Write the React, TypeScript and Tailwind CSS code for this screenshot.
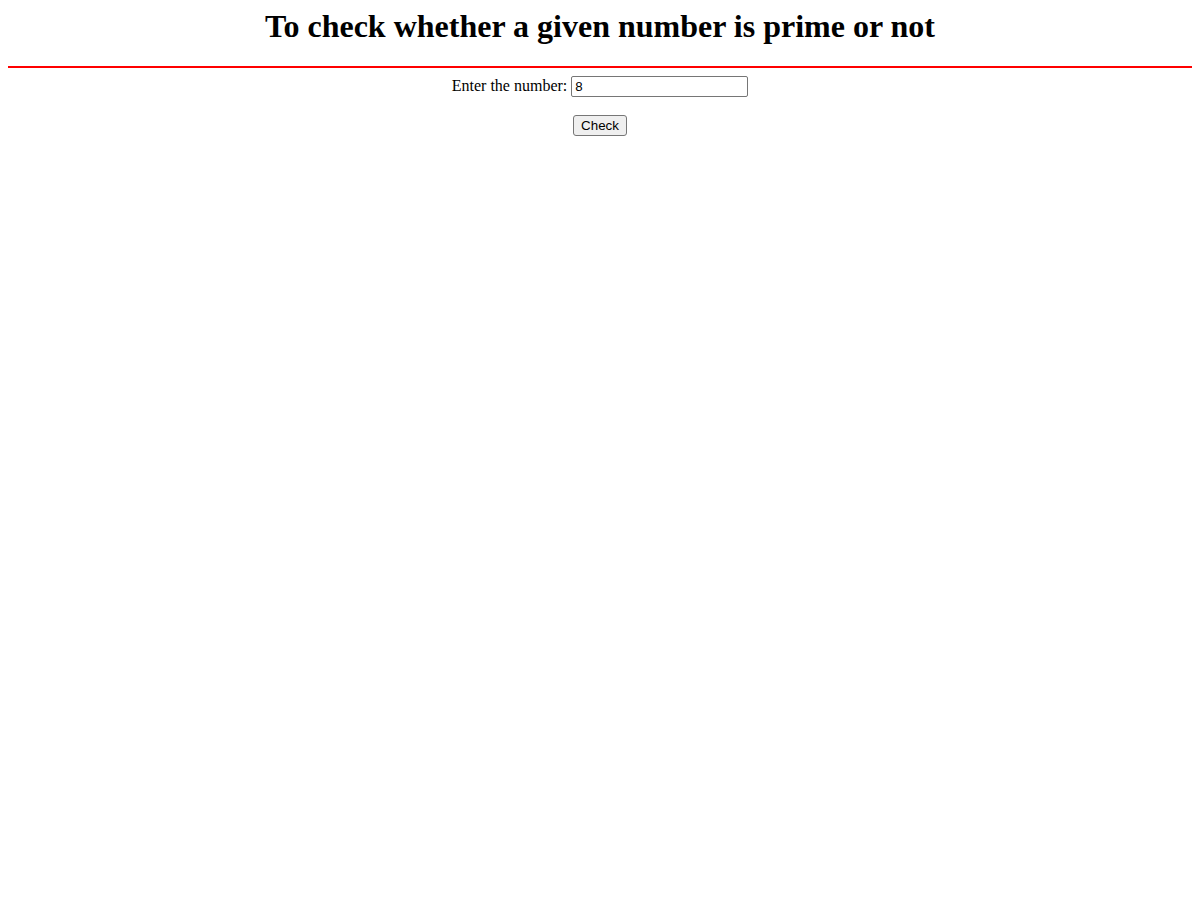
export default function App() {
  return (
    <div className="min-h-[900px] bg-white p-2 font-['Liberation_Serif',serif] text-black">
      <h1 className="text-center text-[32px] font-bold leading-[37px]">
        To check whether a given number is prime or not
      </h1>
      <div className="mt-[21px] h-[2px] w-full bg-[#ff0000]" />
      <form className="mt-2 flex flex-col items-center" onSubmit={(e) => e.preventDefault()}>
        <div className="flex items-start h-[21px]">
          <label className="text-[16px] leading-[19px]">Enter the number:</label>
          <input
            type="text"
            defaultValue="8"
            className="ml-[4px] h-[21px] w-[177px] rounded-[2px] border border-[#767676] px-[3px] font-['Liberation_Sans',Arial,sans-serif] text-[13.33px] text-black outline-none"
          />
        </div>
        <button
          type="submit"
          className="mt-[18px] h-[21px] w-[54px] rounded-[3px] border border-[#767676] bg-[#efefef] font-['Liberation_Sans',Arial,sans-serif] text-[13.33px] leading-[19px] text-black"
        >
          Check
        </button>
      </form>
    </div>
  );
}
